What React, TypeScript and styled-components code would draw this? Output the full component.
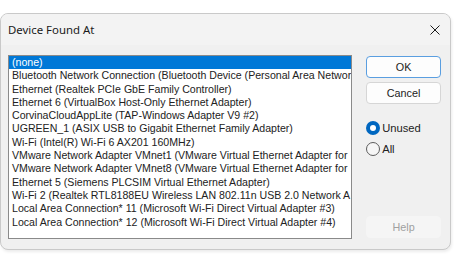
import styled, { createGlobalStyle } from 'styled-components';
import { useState } from 'react';

const GlobalStyle = createGlobalStyle`
  html, body {
    margin: 0;
    padding: 0;
    background: #ffffff;
  }
`;

const Page = styled.div`
  padding-top: 13px;
  width: 464px;
  height: 269px;
  box-sizing: border-box;
`;

const Dialog = styled.div`
  width: 451px;
  height: 237px;
  box-sizing: border-box;
  border: 1px solid #c9c9c9;
  border-radius: 8px;
  background: #f0f0f0;
  display: flex;
  flex-direction: column;
  overflow: hidden;
  box-shadow: 1px 2px 3px rgba(0, 0, 0, 0.08);
`;

const TitleBar = styled.div`
  height: 31px;
  display: flex;
  align-items: center;
  justify-content: space-between;
  padding: 0 9px 0 7px;
  background: #f3f3f3;
  font-family: "Noto Sans", "Open Sans", sans-serif;
  font-size: 11.4px;
  color: #1a1a1a;
`;

const CloseButton = styled.div`
  width: 12px;
  height: 12px;
  display: flex;
  align-items: center;
  justify-content: center;
`;

const Body = styled.div`
  flex: 1;
  display: flex;
  padding: 10px 9px 10px 7px;
  gap: 14px;
`;

const ListBox = styled.div`
  width: 345px;
  height: 184px;
  box-sizing: border-box;
  border: 1px solid #8a8a8a;
  background: #ffffff;
  overflow: hidden;
`;

const Row = styled.div<{ $selected?: boolean }>`
  height: 13.3px;
  line-height: 13px;
  padding-left: 3px;
  white-space: nowrap;
  overflow: hidden;
  font-family: "Liberation Sans", Arial, sans-serif;
  font-size: 10.6px;
  color: ${p => (p.$selected ? '#ffffff' : '#222222')};
  background: ${p => (p.$selected ? '#0078d7' : 'transparent')};
`;

const Side = styled.div`
  width: 75px;
  display: flex;
  flex-direction: column;
`;

const Button = styled.div<{ $default?: boolean; $disabled?: boolean }>`
  height: 22px;
  box-sizing: border-box;
  border-radius: 4px;
  border: 1px solid ${p => (p.$default ? '#5a9ee0' : p.$disabled ? '#f5f5f5' : '#d6d6d6')};
  background: ${p => (p.$disabled ? '#f5f5f5' : '#fdfdfd')};
  color: ${p => (p.$disabled ? '#a0a0a0' : '#222222')};
  display: flex;
  align-items: center;
  justify-content: center;
  font-family: "Liberation Sans", Arial, sans-serif;
  font-size: 10.8px;
`;

const OkButton = styled(Button)`
  margin-top: 1px;
  border-width: ${p => (p.$default ? '1.5px' : '1px')};
`;

const CancelButton = styled(Button)`
  margin-top: 4px;
`;

const HelpButton = styled(Button)`
  margin-top: auto;
  margin-bottom: 1px;
`;

const RadioGroup = styled.div`
  margin-top: 16px;
  display: flex;
  flex-direction: column;
  gap: 5px;
`;

const RadioRow = styled.div`
  height: 16px;
  line-height: 16px;
  display: flex;
  align-items: center;
  gap: 2px;
  font-family: "Liberation Sans", Arial, sans-serif;
  font-size: 11.2px;
  color: #222222;
`;

const RadioDot = styled.span<{ $checked?: boolean }>`
  width: 14px;
  height: 14px;
  flex: none;
  box-sizing: border-box;
  border-radius: 50%;
  background: ${p => (p.$checked ? '#0067c0' : '#f6f6f6')};
  border: ${p => (p.$checked ? 'none' : '1px solid #5d5d5d')};
  display: flex;
  align-items: center;
  justify-content: center;
  &::after {
    content: '';
    display: ${p => (p.$checked ? 'block' : 'none')};
    width: 6px;
    height: 6px;
    border-radius: 50%;
    background: #ffffff;
  }
`;

// the list is narrower than the adapter names; only the visible part is shown
const items = [
  '(none)',
  'Bluetooth Network Connection (Bluetooth Device (Personal Area Networ',
  'Ethernet (Realtek PCIe GbE Family Controller)',
  'Ethernet 6 (VirtualBox Host-Only Ethernet Adapter)',
  'CorvinaCloudAppLite (TAP-Windows Adapter V9 #2)',
  'UGREEN_1 (ASIX USB to Gigabit Ethernet Family Adapter)',
  'Wi-Fi (Intel(R) Wi-Fi 6 AX201 160MHz)',
  'VMware Network Adapter VMnet1 (VMware Virtual Ethernet Adapter for',
  'VMware Network Adapter VMnet8 (VMware Virtual Ethernet Adapter for',
  'Ethernet 5 (Siemens PLCSIM Virtual Ethernet Adapter)',
  'Wi-Fi 2 (Realtek RTL8188EU Wireless LAN 802.11n USB 2.0 Network A',
  'Local Area Connection* 11 (Microsoft Wi-Fi Direct Virtual Adapter #3)',
  'Local Area Connection* 12 (Microsoft Wi-Fi Direct Virtual Adapter #4)',
];

export default function App() {
  const [selected, setSelected] = useState(0);
  const [mode, setMode] = useState<'unused' | 'all'>('unused');

  return (
    <Page>
      <GlobalStyle />
      <Dialog>
        <TitleBar>
          <span>Device Found At</span>
          <CloseButton>
            <svg width="12" height="12" viewBox="0 0 12 12">
              <path d="M1.5 1.5 L10.5 10.5 M10.5 1.5 L1.5 10.5" stroke="#1a1a1a" strokeWidth="1" />
            </svg>
          </CloseButton>
        </TitleBar>
        <Body>
          <ListBox>
            {items.map((item, i) => (
              <Row key={i} $selected={i === selected} onClick={() => setSelected(i)}>
                {item}
              </Row>
            ))}
          </ListBox>
          <Side>
            <OkButton $default>OK</OkButton>
            <CancelButton>Cancel</CancelButton>
            <RadioGroup>
              <RadioRow onClick={() => setMode('unused')}>
                <RadioDot $checked={mode === 'unused'} />
                <span>Unused</span>
              </RadioRow>
              <RadioRow onClick={() => setMode('all')}>
                <RadioDot $checked={mode === 'all'} />
                <span>All</span>
              </RadioRow>
            </RadioGroup>
            <HelpButton $disabled>Help</HelpButton>
          </Side>
        </Body>
      </Dialog>
    </Page>
  );
}
